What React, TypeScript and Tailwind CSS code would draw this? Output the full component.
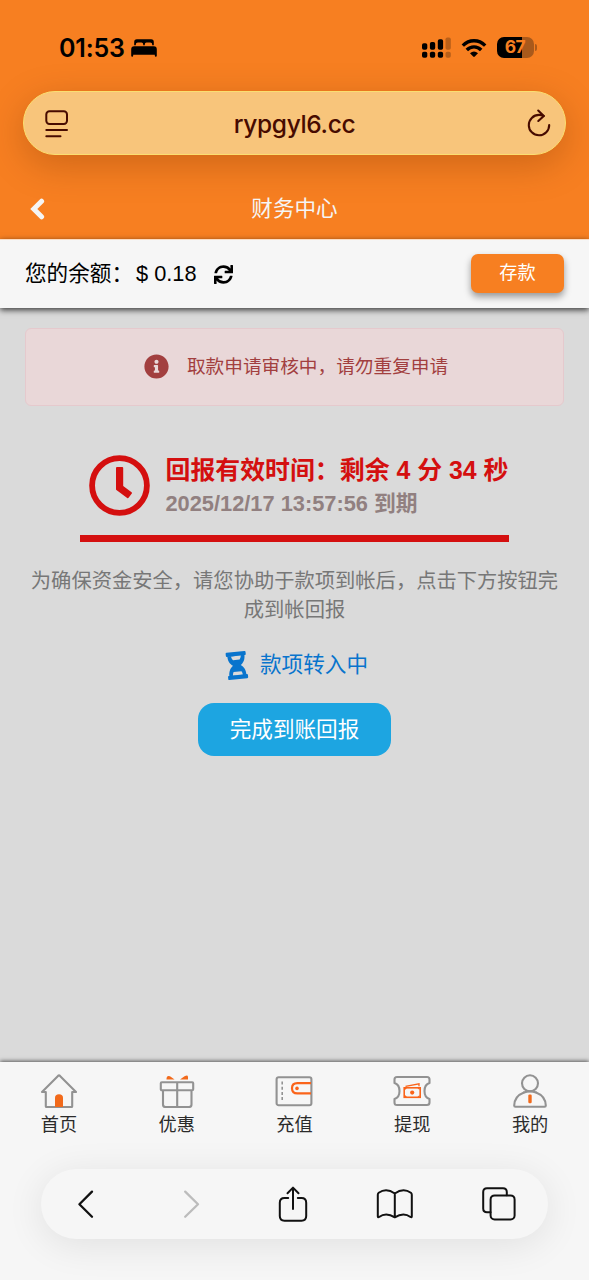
import React from "react";
import { FaInfoCircle, FaSync } from "react-icons/fa";

const cjk = "font-['Liberation_Sans','Noto_Sans_CJK_SC',sans-serif]";

function BedIcon() {
  return (
    <svg width="26" height="20" viewBox="0 0 26 20" fill="#000">
      <path d="M3.2 7.2V4Q3.2 1.2 5.8 1.2H20.2Q22.8 1.2 22.8 4V7.2H21.2V6.6Q21.2 4.6 19.2 4.6H15.6Q13.8 4.6 13.8 6.2V7.2H12.2V6.2Q12.2 4.6 10.4 4.6H6.8Q4.8 4.6 4.8 6.6V7.2Z" />
      <path d="M3.2 8.2H22.8Q25.8 8.2 25.8 11.4V17.6Q25.8 18.8 24.8 18.8Q23.8 18.8 23.8 17.6V16.8H2.2V17.6Q2.2 18.8 1.2 18.8Q.2 18.8 .2 17.6V11.4Q.2 8.2 3.2 8.2Z" />
    </svg>
  );
}

function SignalIcon() {
  return (
    <svg width="29" height="21" viewBox="0 0 29 21" fill="#000">
      <rect x="0" y="6.3" width="5.3" height="6.4" rx="1.8" />
      <rect x="7.9" y="5" width="5.3" height="7.7" rx="1.8" />
      <rect x="15.8" y="2.3" width="5.3" height="10.4" rx="1.8" />
      <rect x="23.5" y="0.5" width="5.3" height="12.2" rx="1.8" opacity=".25" />
      <rect x="0" y="14.7" width="5.3" height="6" rx="1.8" />
      <rect x="7.9" y="14.7" width="5.3" height="6" rx="1.8" />
      <rect x="15.8" y="14.7" width="5.3" height="6" rx="1.8" />
      <rect x="23.5" y="14.7" width="5.3" height="6" rx="1.8" opacity=".25" />
    </svg>
  );
}

function WifiIcon() {
  return (
    <svg width="26" height="20" viewBox="0 0 26 20">
      <g fill="none" stroke="#000" strokeWidth="3.4">
        <path d="M1.8 7.6Q6.6 2.8 13 2.8T24.2 7.6" />
        <path d="M5.8 12Q8.8 8.9 13 8.9T20.2 12" />
      </g>
      <path d="M9 15.2Q13 11.7 17 15.2L13.8 18.6Q13 19.3 12.2 18.6Z" fill="#000" />
    </svg>
  );
}

function Battery() {
  return (
    <div className="flex items-center">
      <div className="flex h-[21px] w-[37px] items-center justify-center rounded-[7px] bg-[linear-gradient(90deg,#000_67%,#a9591b_67%)] pb-px font-['Inter',sans-serif] text-[17.5px] font-bold leading-none tracking-[-0.5px] text-[#f77f21]">
        67
      </div>
      <div className="ml-px h-[7px] w-[2.5px] rounded-r-full bg-[#ad5a1a]" />
    </div>
  );
}

function PageMenuIcon() {
  return (
    <svg width="24" height="28" viewBox="0 0 24 28" fill="none" stroke="#470b00" strokeWidth="2" strokeLinecap="round">
      <rect x="1.3" y="1.3" width="20.7" height="12.7" rx="3.2" />
      <path d="M1.3 20H22M1.3 26.2H15.5" />
    </svg>
  );
}

function ReloadIcon() {
  return (
    <svg width="24" height="28" viewBox="0 0 24 28" fill="none" stroke="#470b00" strokeWidth="2.1" strokeLinecap="round" strokeLinejoin="round">
      <path d="M22.2 16A10.2 10.2 0 1 1 12 5.9Q14 5.9 16.8 6.9" />
      <path d="M11.2 1.5L16.8 6.9L11.3 12" />
    </svg>
  );
}

function BackChevron() {
  return (
    <svg className="ml-[30px]" width="16" height="22" viewBox="0 0 16 22">
      <path d="M11.6 3.2L3.8 11L11.6 18.8" fill="none" stroke="#f5f5f5" strokeWidth="5" strokeLinecap="round" />
    </svg>
  );
}

function ClockIcon() {
  return (
    <svg width="61" height="61" viewBox="0 0 61 61">
      <circle cx="30.5" cy="30.5" r="27.4" fill="none" stroke="#d40f0f" strokeWidth="5.8" />
      <path d="M28 12H33.2Q34.2 12 34.2 13V31L42.6 37.2Q43.4 37.8 42.8 38.6L39.6 42.8Q39 43.6 38.2 43L27.4 35.1Q27 34.8 27 34.2V13Q27 12 28 12Z" fill="#d40f0f" />
    </svg>
  );
}

function HourglassIcon() {
  return (
    <svg width="24" height="31" viewBox="0 0 24 31">
      <g transform="rotate(-6 12 15.5)" fill="#0874cd">
        <rect x="1.9" y="1.8" width="20" height="4.2" rx="1" />
        <rect x="1.9" y="25" width="20" height="4.2" rx="1" />
        <path
          fillRule="evenodd"
          d="M3.3 5.5H20.5C20.5 10.8 18.6 13.2 15.8 15.4C18.6 17.6 20.5 20.4 20.5 25.7H3.3C3.3 20.4 5.2 17.6 8 15.4C5.2 13.2 3.3 10.8 3.3 5.5ZM7 5.8C7.2 7.7 7.8 8.8 8.6 9.8H15.2C16 8.8 16.6 7.7 16.8 5.8ZM6.9 25.2H16.9C16.8 23.8 16.5 22.8 15.9 21.7H7.9C7.3 22.8 7 23.8 6.9 25.2Z"
        />
      </g>
    </svg>
  );
}

const navStroke = { fill: "none", stroke: "#929292", strokeWidth: 2.1, strokeLinejoin: "round" as const, strokeLinecap: "round" as const };

function HomeIcon() {
  return (
    <svg width="38" height="34" viewBox="0 0 38 34">
      <path {...navStroke} d="M5.8 18H2L18 1.9Q19 1 20 1.9L36 18H32.2V32.3Q32.2 33 31.5 33H6.5Q5.8 33 5.8 32.3Z" />
      <path d="M15 33V24Q15 20.3 19 20.3T23 24V33Z" fill="#f26a1b" />
    </svg>
  );
}

function GiftIcon() {
  return (
    <svg width="38" height="34" viewBox="0 0 38 34">
      <path {...navStroke} d="M3.8 8.2H34.2Q35.2 8.2 35.2 9.2V15.2Q35.2 16.2 34.2 16.2H3.8Q2.8 16.2 2.8 15.2V9.2Q2.8 8.2 3.8 8.2ZM5 16.2V30.5Q5 33 7.5 33H31Q33.5 33 33.5 30.5V16.2M19.2 8.2V33" />
      <path d="M8.5 5Q8.6 1.1 12 2.3L16.6 5.6H8.5ZM30 5.6V2.9Q29.8 .3 26.5 2.3L22 5.6Z" fill="#f26a1b" />
    </svg>
  );
}

function WalletIcon() {
  return (
    <svg width="38" height="34" viewBox="0 0 38 34">
      <rect {...navStroke} x="1.6" y="3.2" width="34.8" height="28" rx="2" />
      <path d="M7.2 7.5V28" stroke="#929292" strokeWidth="1.6" strokeDasharray="3 2.2" />
      <path d="M36 9.2H22.3Q17 9.2 17 14.3T22.3 19.4H36" fill="none" stroke="#fa641a" strokeWidth="2.2" />
      <circle cx="22" cy="14.4" r="1.8" fill="#fa641a" />
    </svg>
  );
}

function TicketIcon() {
  return (
    <svg width="38" height="34" viewBox="0 0 38 34">
      <path {...navStroke} d="M4 3H34Q36.5 3 36.5 5.5V9Q31.5 10.5 31.5 17T36.5 25V28.5Q36.5 31 34 31H4Q1.5 31 1.5 28.5V25Q6.5 23.5 6.5 17T1.5 9V5.5Q1.5 3 4 3Z" />
      <rect x="11.2" y="13.8" width="16" height="9.5" fill="none" stroke="#fa641a" strokeWidth="1.6" />
      <circle cx="19.2" cy="18.6" r="2.1" fill="#fa641a" />
      <path d="M12.5 12.3L26 9.8V12.2" fill="none" stroke="#fa641a" strokeWidth="1.3" />
      <path d="M12 14L14 14L12 16ZM26.5 14V16L24.5 14ZM12 23V21L14 23ZM26.5 23H24.5L26.5 21Z" fill="#fa641a" />
    </svg>
  );
}

function PersonIcon() {
  return (
    <svg width="38" height="34" viewBox="0 0 38 34">
      <circle {...navStroke} cx="19" cy="9.3" r="8" />
      <path {...navStroke} d="M12.9 18.5Q3.4 22.2 3.2 31.6Q3.2 32.8 4.4 32.8H33.6Q34.8 32.8 34.8 31.6Q34.6 22.2 25.1 18.5" />
      <path {...navStroke} d="M12.9 18.5Q19 16.2 25.1 18.5" />
      <rect x="17.3" y="20.5" width="3.4" height="8.7" rx="1.2" fill="#f26a1b" />
    </svg>
  );
}

const navItems = [
  { label: "首页", Icon: HomeIcon },
  { label: "优惠", Icon: GiftIcon },
  { label: "充值", Icon: WalletIcon },
  { label: "提现", Icon: TicketIcon },
  { label: "我的", Icon: PersonIcon },
];

function BrowserToolbar() {
  const line = { fill: "none", stroke: "#111", strokeWidth: 2, strokeLinecap: "round" as const, strokeLinejoin: "round" as const };
  return (
    <div className="mx-[41px] mt-[29px] flex h-[70px] items-center justify-between rounded-full bg-[#f6f6f6] pl-[36px] pr-[32px] shadow-[0_6px_38px_rgba(0,0,0,0.09)]">
      <svg width="18" height="30" viewBox="0 0 18 30" {...line} strokeWidth={2.3}>
        <path d="M15 2.6L2.4 15.2L15 27.8" />
      </svg>
      <svg className="ml-[19px]" width="18" height="30" viewBox="0 0 18 30" {...line} stroke="#bcbcbc" strokeWidth={2.3}>
        <path d="M3.2 2.6L16 15.2L3.2 27.8" />
      </svg>
      <svg className="ml-[10px]" width="30" height="36" viewBox="0 0 30 36" {...line}>
        <path d="M10.2 12H6.5Q1.8 12 1.8 16.7V30Q1.8 34.7 6.5 34.7H23.5Q28.2 34.7 28.2 30V16.7Q28.2 12 23.5 12H19.8M15 23V1.8M9.5 7.2L15 1.6L20.5 7.2" />
      </svg>
      <svg width="37" height="30" viewBox="0 0 37 30" {...line}>
        <path d="M18.8 4.5Q10.3-1.5 2.7 3.8Q1.8 4.5 1.8 5.7V27.2Q1.8 28.8 3.1 28Q10 23 18.8 28.3Q27.6 23 34.5 28Q35.8 28.8 35.8 27.2V5.7Q35.8 4.5 34.9 3.8Q27.3-1.5 18.8 4.5V28" />
      </svg>
      <svg width="35" height="34" viewBox="0 0 35 34" {...line}>
        <path d="M25.8 8.3V5Q25.8 1.2 22 1.2H6Q2.2 1.2 2.2 5V21.5Q2.2 25.3 6 25.3H9.5" />
        <rect x="9.6" y="8.4" width="24" height="24" rx="4" />
      </svg>
    </div>
  );
}

export default function App() {
  return (
    <div className={`flex h-[1280px] w-[589px] flex-col overflow-hidden bg-[#dadada] ${cjk}`}>
      <header className="flex h-[239px] shrink-0 flex-col bg-[#f77f21]">
        <div className="flex h-[91px] shrink-0 items-start pl-[59px] pr-[52px] pt-[32px]">
          <span className="w-[72px] font-['Inter',sans-serif] text-[25px] font-semibold leading-[32px] tracking-[-0.2px]">01:53</span>
          <div className="mt-[6px]">
            <BedIcon />
          </div>
          <div className="ml-auto mt-[5px] flex items-center">
            <SignalIcon />
            <div className="ml-[10px] mr-[10px]">
              <WifiIcon />
            </div>
            <Battery />
          </div>
        </div>
        <div className="mx-[23px] grid h-[64px] shrink-0 grid-cols-[60px_1fr_60px] items-center rounded-full border border-[#fbde70] bg-[#f8c57b] shadow-[0_10px_36px_rgba(100,40,0,0.28)]">
          <div className="pl-[21px] pt-px">
            <PageMenuIcon />
          </div>
          <span className="pt-px text-center font-['Inter',sans-serif] text-[24.5px] font-medium leading-[30px] tracking-[-0.35px] text-[#470b00]">rypgyl6.cc</span>
          <div className="flex justify-end pr-[14px]">
            <ReloadIcon />
          </div>
        </div>
        <div className="grid flex-1 grid-cols-[60px_1fr_60px] items-center pt-[24px] text-[#f5f5f5]">
          <BackChevron />
          <h1 className="text-center text-[21.6px] leading-[30px]">财务中心</h1>
        </div>
      </header>

      <section className="z-10 flex h-[69px] shrink-0 items-center border-t border-[#fbdcc2] bg-[#f6f6f6] pl-[25px] pr-[25px] shadow-[0_2px_6px_rgba(0,0,0,0.75)]">
        <span className="whitespace-nowrap text-[21.6px] leading-[30px] text-black">您的余额：</span>
        <span className="-mt-px ml-[3px] text-[21.8px] leading-[30px] text-black">$ 0.18</span>
        <FaSync className="ml-[17px]" size={19} />
        <button className="-mt-[2px] ml-auto h-[39px] w-[93px] rounded-[7px] bg-[#f77f21] text-[18.2px] leading-[39px] text-white shadow-[0_4px_7px_rgba(0,0,0,0.38)]">存款</button>
      </section>

      <main className="flex min-h-0 flex-1 flex-col items-center">
        <div className="mt-[20px] flex h-[78px] w-[539px] shrink-0 items-center justify-center rounded-[6px] border-[1.5px] border-[#e5c9cd] bg-[#e9d7d8] pl-[3px] text-[#a23f3f]">
          <FaInfoCircle className="-mt-[2px]" size={25} />
          <span className="ml-[18px] text-[18.67px] leading-[28px]">取款申请审核中，请勿重复申请</span>
        </div>

        <div className="mt-[44px] flex h-[92px] w-[429px] shrink-0 border-b-[7px] border-[#d40f0f] pl-[8.5px]">
          <div className="mt-[5px]">
            <ClockIcon />
          </div>
          <div className="ml-[16px] whitespace-nowrap font-bold">
            <div className="mt-[2px] text-[24.9px] leading-[36px] text-[#d40f0f]">回报有效时间：剩余 4 分 34 秒</div>
            <div className="text-[21.8px] leading-[32px] text-[#918080]">2025/12/17 13:57:56 到期</div>
          </div>
        </div>

        <p className="mt-[25px] w-[529px] text-center text-[20.3px] leading-[29px] text-[#777]">
          为确保资金安全，请您协助于款项到帐后，点击下方按钮完成到帐回报
        </p>

        <div className="mt-[24px] flex h-[32px] items-center pl-[4px] text-[21.6px] leading-[32px] text-[#0874cd]">
          <HourglassIcon />
          <span className="ml-[11px]">款项转入中</span>
        </div>
        <button className="mt-[22px] h-[53px] w-[193px] rounded-[16px] bg-[#1da5e1] text-[21.6px] leading-[53px] text-white">完成到账回报</button>
      </main>

      <footer className="z-10 h-[218px] shrink-0 bg-[#f6f6f6] shadow-[0_-1px_4px_rgba(0,0,0,0.6)]">
        <nav className="grid h-[78px] grid-cols-5 pt-[11.5px]">
          {navItems.map(({ label, Icon }) => (
            <a key={label} className="flex flex-col items-center">
              <Icon />
              <span className="mt-[3.5px] text-[18.2px] leading-[28px] text-[#2b2b2b]">{label}</span>
            </a>
          ))}
        </nav>
        <BrowserToolbar />
      </footer>
    </div>
  );
}
